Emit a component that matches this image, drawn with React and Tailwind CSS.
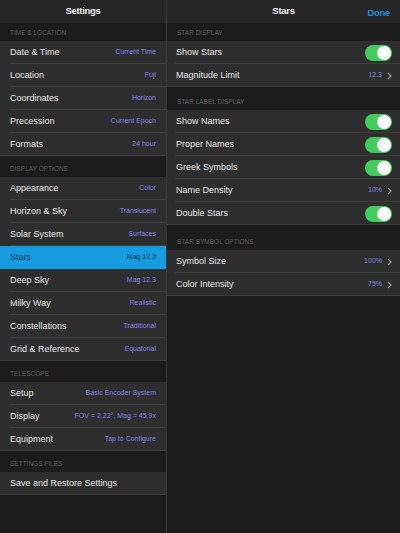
import React from "react";

const font = { fontFamily: '"Liberation Sans", Arial, sans-serif' };

function SectionHeader({ title, h }) {
  return (
    <div className={`flex items-end pb-[3px] bg-[#1c1c1c] ${h}`}>
      <span className="pl-[10px] text-[6.5px] uppercase text-[#5c5c5c]">{title}</span>
    </div>
  );
}

function LeftRow({ label, value, last, active }) {
  return (
    <div className={`relative flex h-[23px] items-center justify-between pl-[10px] pr-[10px] ${active ? "bg-[#169ddf]" : "bg-[#2e2e2e]"}`}>
      <span className={`text-[9px] ${active ? "text-[#0b2f62]" : "text-[#e6e6e6]"}`}>{label}</span>
      <span className={`text-[7px] ${active ? "text-[#0b2f62]" : "text-[#8585e6]"}`}>{value}</span>
      {!last && !active && <div className="absolute bottom-0 left-[10px] right-0 h-px bg-[#3c3c3c]" />}
      {last && <div className="absolute bottom-0 left-0 right-0 h-px bg-[#3c3c3c]" />}
    </div>
  );
}

function Toggle() {
  return (
    <div className="flex h-[16px] w-[27px] items-center justify-end rounded-full bg-[#41cc5c] pr-px">
      <div className="h-[14px] w-[14px] rounded-full bg-white" />
    </div>
  );
}

function Chevron() {
  return (
    <svg width="5" height="8" viewBox="0 0 5 8" className="ml-[5px]">
      <path d="M1 1 L4 4 L1 7" fill="none" stroke="#9a9a9a" strokeWidth="1.2" />
    </svg>
  );
}

function RightRow({ label, toggle, value, last }) {
  return (
    <div className="relative flex h-[23px] items-center justify-between bg-[#2e2e2e] pl-[9px] pr-[8px]">
      <span className="text-[9px] text-[#e6e6e6]">{label}</span>
      {toggle ? (
        <Toggle />
      ) : (
        <span className="flex items-center">
          <span className="text-[7px] text-[#8585e6]">{value}</span>
          <Chevron />
        </span>
      )}
      {!last && <div className="absolute bottom-0 left-[8px] right-0 h-px bg-[#3c3c3c]" />}
      {last && <div className="absolute bottom-0 left-0 right-0 h-px bg-[#3c3c3c]" />}
    </div>
  );
}

export default function App() {
  return (
    <div style={font} className="flex h-[533px] w-[400px] bg-[#1c1c1c]">
      <div className="flex w-[166px] flex-col">
        <div className="flex h-[23px] items-center justify-center bg-[#262626]">
          <span className="text-[9.5px] font-bold tracking-[-0.3px] text-[#f0f0f0]">Settings</span>
        </div>
        <SectionHeader title="Time & Location" h="h-[18px]" />
        <LeftRow label="Date & Time" value="Current Time" />
        <LeftRow label="Location" value="Fuji" />
        <LeftRow label="Coordinates" value="Horizon" />
        <LeftRow label="Precession" value="Current Epoch" />
        <LeftRow label="Formats" value="24 hour" last />
        <SectionHeader title="Display Options" h="h-[21px]" />
        <LeftRow label="Appearance" value="Color" />
        <LeftRow label="Horizon & Sky" value="Translucent" />
        <LeftRow label="Solar System" value="Surfaces" />
        <LeftRow label="Stars" value="Mag 12.3" active />
        <LeftRow label="Deep Sky" value="Mag 12.3" />
        <LeftRow label="Milky Way" value="Realistic" />
        <LeftRow label="Constellations" value="Traditional" />
        <LeftRow label="Grid & Reference" value="Equatorial" last />
        <SectionHeader title="Telescope" h="h-[21px]" />
        <LeftRow label="Setup" value="Basic Encoder System" />
        <LeftRow label="Display" value="FOV = 2.22°, Mag = 45.9x" />
        <LeftRow label="Equipment" value="Tap to Configure" last />
        <SectionHeader title="Settings Files" h="h-[21px]" />
        <LeftRow label="Save and Restore Settings" value="" last />
      </div>
      <div className="w-px bg-[#383838]" />
      <div className="flex flex-1 flex-col">
        <div className="relative flex h-[23px] items-center justify-center bg-[#262626]">
          <span className="text-[9.5px] font-bold tracking-[-0.3px] text-[#f0f0f0]">Stars</span>
          <span className="absolute right-[10px] top-[6px] text-[9.5px] font-bold tracking-[-0.3px] text-[#1a8ee0]">Done</span>
        </div>
        <SectionHeader title="Star Display" h="h-[18px]" />
        <RightRow label="Show Stars" toggle />
        <RightRow label="Magnitude Limit" value="12.3" last />
        <SectionHeader title="Star Label Display" h="h-[23px]" />
        <RightRow label="Show Names" toggle />
        <RightRow label="Proper Names" toggle />
        <RightRow label="Greek Symbols" toggle />
        <RightRow label="Name Density" value="10%" />
        <RightRow label="Double Stars" toggle last />
        <SectionHeader title="Star Symbol Options" h="h-[25px]" />
        <RightRow label="Symbol Size" value="100%" />
        <RightRow label="Color Intensity" value="75%" last />
      </div>
    </div>
  );
}
